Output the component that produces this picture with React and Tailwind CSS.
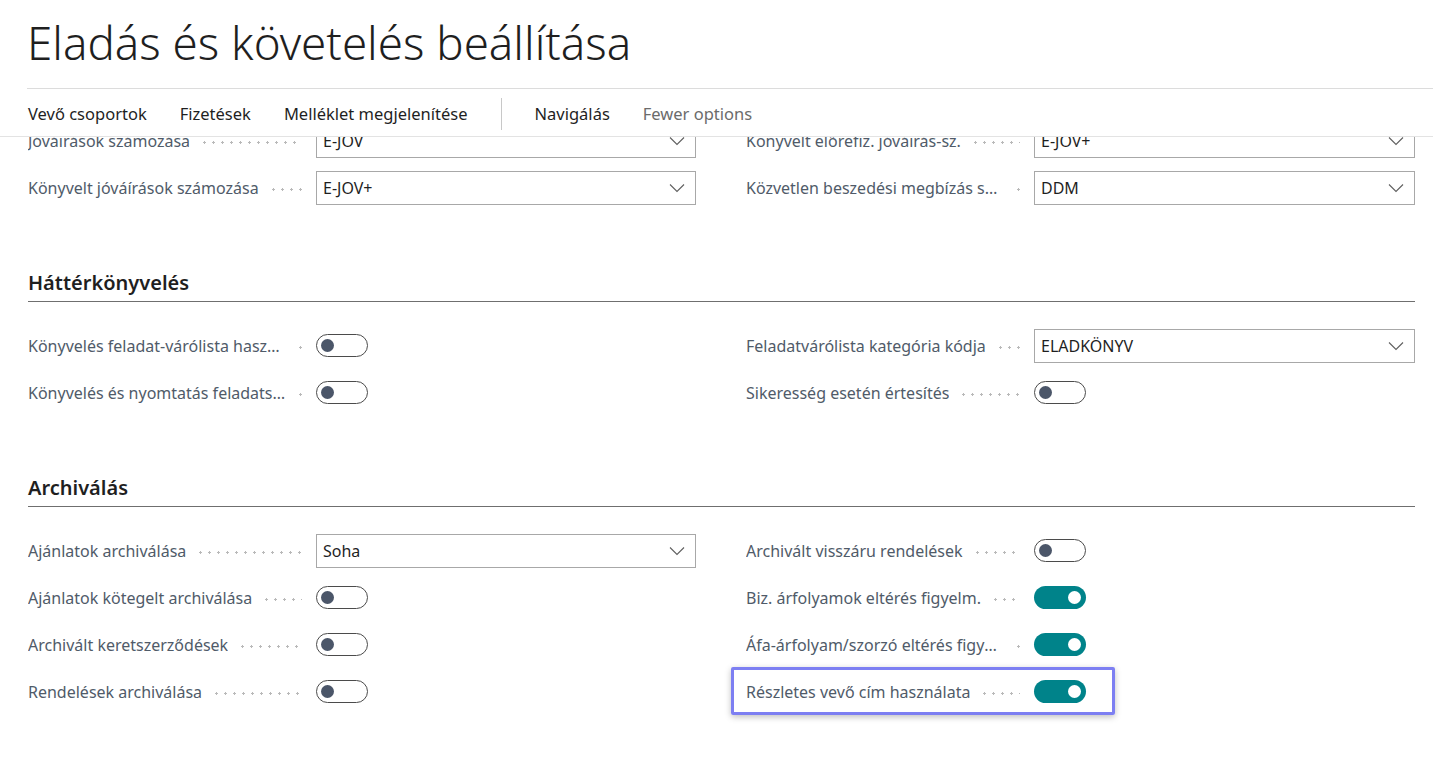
import { useState } from "react";

const FONT = "font-['Segoe_UI','Noto_Sans',sans-serif]";

function Chevron() {
  return (
    <svg width="16" height="10" viewBox="0 0 16 10" fill="none" className="shrink-0">
      <path d="M1 1.5 L8 8.5 L15 1.5" stroke="#5f5f5f" strokeWidth="1.1" />
    </svg>
  );
}

function Dropdown({ value }) {
  return (
    <div className="flex h-[34px] flex-1 items-center justify-between border border-[#a8a8a8] bg-white pl-[6px] pr-[10px] text-[16px] text-[#1f1f1f]">
      <span>{value}</span>
      <Chevron />
    </div>
  );
}

function Toggle({ on }) {
  return on ? (
    <div className="flex h-[23px] w-[52px] items-center justify-end rounded-full bg-[#00838a] pr-[5px]">
      <div className="h-[13px] w-[13px] rounded-full bg-white" />
    </div>
  ) : (
    <div className="flex h-[23px] w-[52px] items-center rounded-full border border-[#4b4b4b] bg-white pl-[4px]">
      <div className="h-[13px] w-[13px] rounded-full bg-[#4b5669]" />
    </div>
  );
}

function Field({ label, children, highlight }) {
  return (
    <div className="relative flex h-[47px] items-center">
      {highlight && (
        <div className="pointer-events-none absolute left-[-15px] top-[-1px] h-[48px] w-[384px] rounded-[2px] border-[3px] border-[#7d7ff2] shadow-[0_2px_6px_rgba(0,0,0,0.25)]" />
      )}
      <div className="flex w-[288px] shrink-0 items-center">
        <span className="truncate text-[16px] text-[#505b69]">{label}</span>
        <span className="ml-[10px] mr-[14px] mt-[4px] h-[3px] min-w-[6px] flex-1 bg-[radial-gradient(circle,#b9b9b9_1px,transparent_1.3px)] bg-[length:9px_3px] bg-repeat-x" />
      </div>
      <div className="flex flex-1 items-center">{children}</div>
    </div>
  );
}

function Section({ title, left, right }) {
  return (
    <div className="mt-[58px]">
      <div className="border-b border-[#6f6f6f] pb-[4px]">
        <h2 className="h-[28px] text-[20px] font-semibold leading-[28px] text-[#1f1f1f]">{title}</h2>
      </div>
      <div className="grid grid-cols-[668px_669px] gap-x-[50px] pt-[20px]">
        <div>{left}</div>
        <div>{right}</div>
      </div>
    </div>
  );
}

export default function App() {
  const [actions] = useState(["Vevő csoportok", "Fizetések", "Melléklet megjelenítése"]);

  return (
    <div className={`h-[765px] w-[1433px] overflow-hidden bg-white ${FONT}`}>
      <div className="pl-[27px]">
        <h1 className="h-[88px] pt-[12px] text-[45.7px] font-light leading-[60px] text-[#1f1f1f]">
          Eladás és követelés beállítása
        </h1>
        <div className="border-t border-[#dcdcdc]" />
      </div>

      <div className="flex h-[48px] items-center gap-[33px] border-b border-[#e3e3e3] pl-[28px] pt-[3px] text-[16.5px] text-[#1f1f1f]">
        {actions.map((a) => (
          <span key={a}>{a}</span>
        ))}
        <span className="h-[32px] w-px bg-[#c8c8c8]" />
        <span>Navigálás</span>
        <span className="text-[#6b6b6b]">Fewer options</span>
      </div>

      <div className="h-[628px] overflow-hidden">
        <div className="-mt-[20px] pl-[28px] pr-[18px]">
          <div className="grid grid-cols-[668px_669px] gap-x-[50px]">
            <div>
              <Field label="Jóváírások számozása">
                <Dropdown value="E-JOV" />
              </Field>
              <Field label="Könyvelt jóváírások számozása">
                <Dropdown value="E-JOV+" />
              </Field>
            </div>
            <div>
              <Field label="Könyvelt előrefiz. jóváírás-sz.">
                <Dropdown value="E-JOV+" />
              </Field>
              <Field label="Közvetlen beszedési megbízás sorszáma">
                <Dropdown value="DDM" />
              </Field>
            </div>
          </div>

          <Section
            title="Háttérkönyvelés"
            left={
              <>
                <Field label="Könyvelés feladat-várólista használata">
                  <Toggle />
                </Field>
                <Field label="Könyvelés és nyomtatás feladatsor használata">
                  <Toggle />
                </Field>
              </>
            }
            right={
              <>
                <Field label="Feladatvárólista kategória kódja">
                  <Dropdown value="ELADKÖNYV" />
                </Field>
                <Field label="Sikeresség esetén értesítés">
                  <Toggle />
                </Field>
              </>
            }
          />

          <Section
            title="Archiválás"
            left={
              <>
                <Field label="Ajánlatok archiválása">
                  <Dropdown value="Soha" />
                </Field>
                <Field label="Ajánlatok kötegelt archiválása">
                  <Toggle />
                </Field>
                <Field label="Archivált keretszerződések">
                  <Toggle />
                </Field>
                <Field label="Rendelések archiválása">
                  <Toggle />
                </Field>
              </>
            }
            right={
              <>
                <Field label="Archivált visszáru rendelések">
                  <Toggle />
                </Field>
                <Field label="Biz. árfolyamok eltérés figyelm.">
                  <Toggle on />
                </Field>
                <Field label="Áfa-árfolyam/szorzó eltérés figyelmeztetés">
                  <Toggle on />
                </Field>
                <Field label="Részletes vevő cím használata" highlight>
                  <Toggle on />
                </Field>
              </>
            }
          />
        </div>
      </div>
    </div>
  );
}
